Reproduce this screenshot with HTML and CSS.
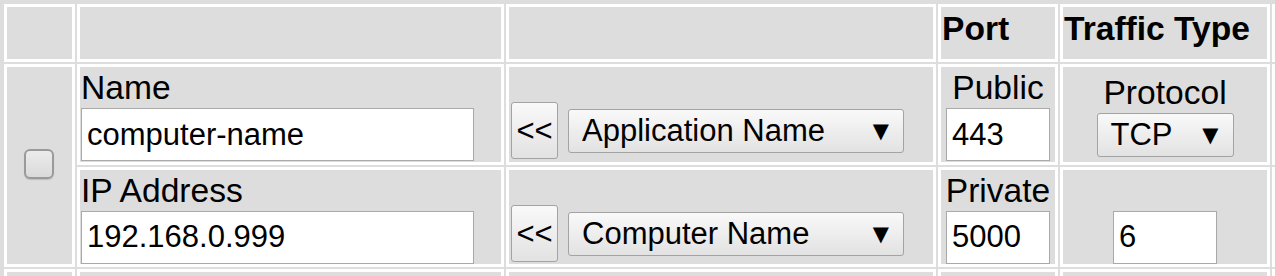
FILE: index.html
```html
<!DOCTYPE html>
<html lang="en">
<head>
  <meta charset="UTF-8">
  <meta name="viewport" content="width=device-width, initial-scale=1.0">
  <title>Port Forwarding Rules</title>
  <link rel="stylesheet" href="styles.css">
</head>
<body>
  <!-- TABLA DE REGLAS -->
  <table class="rules">
    <tr class="row-head">
      <th class="col-check"></th>
      <th class="col-name"></th>
      <th class="col-pick"></th>
      <th class="col-port">Port</th>
      <th class="col-type">Traffic Type</th>
      <th class="col-more"></th>
    </tr>

    <tr class="row-top">
      <td rowspan="2" class="check-cell"><span class="checkbox"></span></td>
      <td>
        <div class="lbl">Name</div>
        <input class="field wide" type="text" value="computer-name">
      </td>
      <td class="pick">
        <div class="spacer"></div>
        <div class="pick-row">
          <button class="btn">&lt;&lt;</button>
          <div class="dropdown big"><span>Application Name</span><span class="caret">▼</span></div>
        </div>
      </td>
      <td class="center">
        <div class="lbl">Public</div>
        <input class="field small" type="text" value="443">
      </td>
      <td class="center">
        <div class="lbl">Protocol</div>
        <div class="dropdown proto"><span>TCP</span><span class="caret">▼</span></div>
      </td>
      <td></td>
    </tr>

    <tr class="row-bottom">
      <td>
        <div class="lbl">IP Address</div>
        <input class="field wide" type="text" value="192.168.0.999">
      </td>
      <td class="pick">
        <div class="spacer"></div>
        <div class="pick-row">
          <button class="btn">&lt;&lt;</button>
          <div class="dropdown big"><span>Computer Name</span><span class="caret">▼</span></div>
        </div>
      </td>
      <td class="center">
        <div class="lbl">Private</div>
        <input class="field small" type="text" value="5000">
      </td>
      <td class="center">
        <div class="lbl"></div>
        <input class="field small" type="text" value="6">
      </td>
      <td></td>
    </tr>

    <tr class="row-next">
      <td></td>
      <td></td>
      <td></td>
      <td></td>
      <td></td>
      <td></td>
    </tr>
  </table>
</body>
</html>
```

FILE: styles.css
```css
body {
  margin: 0;
  padding: 0;
  background-color: #dddddd;
  color: black;
  font-family: 'Liberation Sans', Arial, sans-serif;
  overflow: hidden;
}

.rules {
  border-collapse: separate;
  border-spacing: 2px;
  border: 2px solid #dddddd;
  background-color: #dddddd;
  table-layout: fixed;
  width: 1396px;
}

.rules th, .rules td {
  background-color: #dddddd;
  border: 3px solid white;
  padding: 0 1px;
  box-sizing: border-box;
  vertical-align: middle;
}

.col-check { width: 71px; }
.col-name { width: 427px; }
.col-pick { width: 430px; }
.col-port { width: 120px; }
.col-type { width: 210px; }
.col-more { width: 120px; }

.row-head { height: 58px; }
.row-top { height: 101px; }
.row-bottom { height: 100px; }
.row-next { height: 60px; }

.row-head th {
  font-size: 33.6px;
  font-weight: bold;
  text-align: left;
  vertical-align: top;
  padding-top: 2px;
  line-height: 40px;
  white-space: nowrap;
}

.lbl {
  font-size: 33.6px;
  line-height: 40px;
  height: 40px;
  white-space: nowrap;
}

.center {
  text-align: center;
}

.check-cell {
  text-align: center;
}

.checkbox {
  display: inline-block;
  vertical-align: middle;
  width: 30px;
  height: 30px;
  margin: 0 2px 4px 0;
  box-sizing: border-box;
  border: 2px solid #9a9a9a;
  border-radius: 6px;
  background: linear-gradient(#ececec, #dadada);
  box-shadow: 0 1px 1px rgba(0, 0, 0, 0.15);
}

.field {
  display: block;
  box-sizing: border-box;
  height: 53px;
  margin: 0;
  padding: 0 5px;
  border: 1px solid #a9a9a9;
  background-color: white;
  color: black;
  font-family: 'Liberation Sans', Arial, sans-serif;
  font-size: 31px;
  outline: none;
}

.field.wide {
  width: 393px;
}

.field.small {
  width: 104px;
  margin: 0 auto;
}

.pick {
  vertical-align: top !important;
}

.spacer {
  height: 35px;
}

.pick-row {
  display: flex;
  align-items: center;
  gap: 10px;
}

.btn {
  width: 47px;
  height: 57px;
  box-sizing: border-box;
  margin-left: 1px;
  padding: 0;
  border: 1px solid #a3a3a3;
  border-radius: 3px;
  background: linear-gradient(#f9f9f9, #e2e2e2);
  color: black;
  font-family: 'Liberation Sans', Arial, sans-serif;
  font-size: 31px;
}

.dropdown {
  display: flex;
  align-items: center;
  justify-content: space-between;
  box-sizing: border-box;
  height: 44px;
  padding: 0 14px 0 13px;
  border: 1px solid #a3a3a3;
  border-radius: 3px;
  background: linear-gradient(#f9f9f9, #e2e2e2);
  font-size: 31px;
  white-space: nowrap;
}

.dropdown.big {
  width: 336px;
}

.dropdown.proto {
  width: 137px;
  margin: 0 auto;
}

.caret {
  font-family: 'DejaVu Sans', sans-serif;
  font-size: 21px;
}
```
